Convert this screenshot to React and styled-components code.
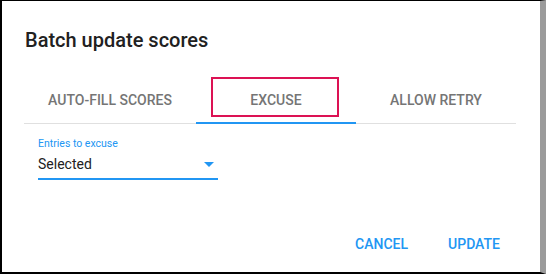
import React, { useState } from 'react';
import styled, { createGlobalStyle } from 'styled-components';

const GlobalStyle = createGlobalStyle`
  html, body {
    margin: 0;
    padding: 0;
    background: #ffffff;
  }
  body {
    font-family: Roboto, "Noto Sans", "Liberation Sans", sans-serif;
  }
`;

const Frame = styled.div`
  box-sizing: border-box;
  width: 546px;
  height: 274px;
  display: flex;
  flex-direction: column;
  background: #ffffff;
  border-top: 1px solid #000000;
  border-left: 2px solid #000000;
  border-bottom: 2px solid #000000;
  border-right: 6px solid #9b9b9b;
`;

const Title = styled.h2`
  margin: 0;
  padding: 27px 0 0 23px;
  font-size: 20px;
  line-height: 24px;
  font-weight: 500;
  color: #212121;
`;

const TabBar = styled.div`
  display: grid;
  grid-template-columns: 1fr 160px 160px;
  margin: 24px 24px 0 22px;
  border-bottom: 1px solid #e0e0e0;
`;

const Tab = styled.button`
  position: relative;
  height: 47px;
  padding: 0;
  border: none;
  background: none;
  font-family: inherit;
  font-size: 14px;
  font-weight: 500;
  text-transform: uppercase;
  color: #757575;
  cursor: pointer;

  &::after {
    content: '';
    position: absolute;
    left: 0;
    right: 0;
    bottom: -1px;
    height: 2px;
    background: ${p => (p.$active ? '#2196f3' : 'transparent')};
  }
`;

const Highlight = styled.span`
  position: absolute;
  left: 15px;
  top: 1px;
  width: 128px;
  height: 40px;
  box-sizing: border-box;
  border: 2px solid #dc1254;
  pointer-events: none;
`;

const Field = styled.div`
  width: 180px;
  margin: 14px 0 0 36px;
`;

const FieldLabel = styled.div`
  font-size: 10.5px;
  line-height: 12px;
  color: #2196f3;
  margin-bottom: 4px;
`;

const SelectRow = styled.div`
  display: flex;
  align-items: center;
  justify-content: space-between;
  padding: 0 4px 4px 0;
  border-bottom: 2px solid #2196f3;
  font-size: 14px;
  line-height: 20px;
  color: #212121;
`;

const Actions = styled.div`
  margin-top: auto;
  margin-bottom: 10px;
  display: flex;
  justify-content: flex-end;
  padding-right: 20px;
`;

const ActionButton = styled.button`
  height: 36px;
  padding: 0 20px;
  border: none;
  background: none;
  font-family: inherit;
  font-size: 14px;
  line-height: 36px;
  font-weight: 500;
  text-transform: uppercase;
  color: #2196f3;
  cursor: pointer;
`;

const tabs = ['Auto-fill scores', 'Excuse', 'Allow retry'];

export default function App() {
  const [active, setActive] = useState(1);

  return (
    <>
      <GlobalStyle />
      <Frame>
        <Title>Batch update scores</Title>
        <TabBar>
          {tabs.map((t, i) => (
            <Tab key={t} $active={i === active} onClick={() => setActive(i)}>
              {t}
              {i === 1 && <Highlight />}
            </Tab>
          ))}
        </TabBar>
        <Field>
          <FieldLabel>Entries to excuse</FieldLabel>
          <SelectRow>
            Selected
            <svg width="10" height="5" viewBox="0 0 10 5">
              <path d="M0 0h10L5 5z" fill="#2196f3" />
            </svg>
          </SelectRow>
        </Field>
        <Actions>
          <ActionButton>Cancel</ActionButton>
          <ActionButton>Update</ActionButton>
        </Actions>
      </Frame>
    </>
  );
}
